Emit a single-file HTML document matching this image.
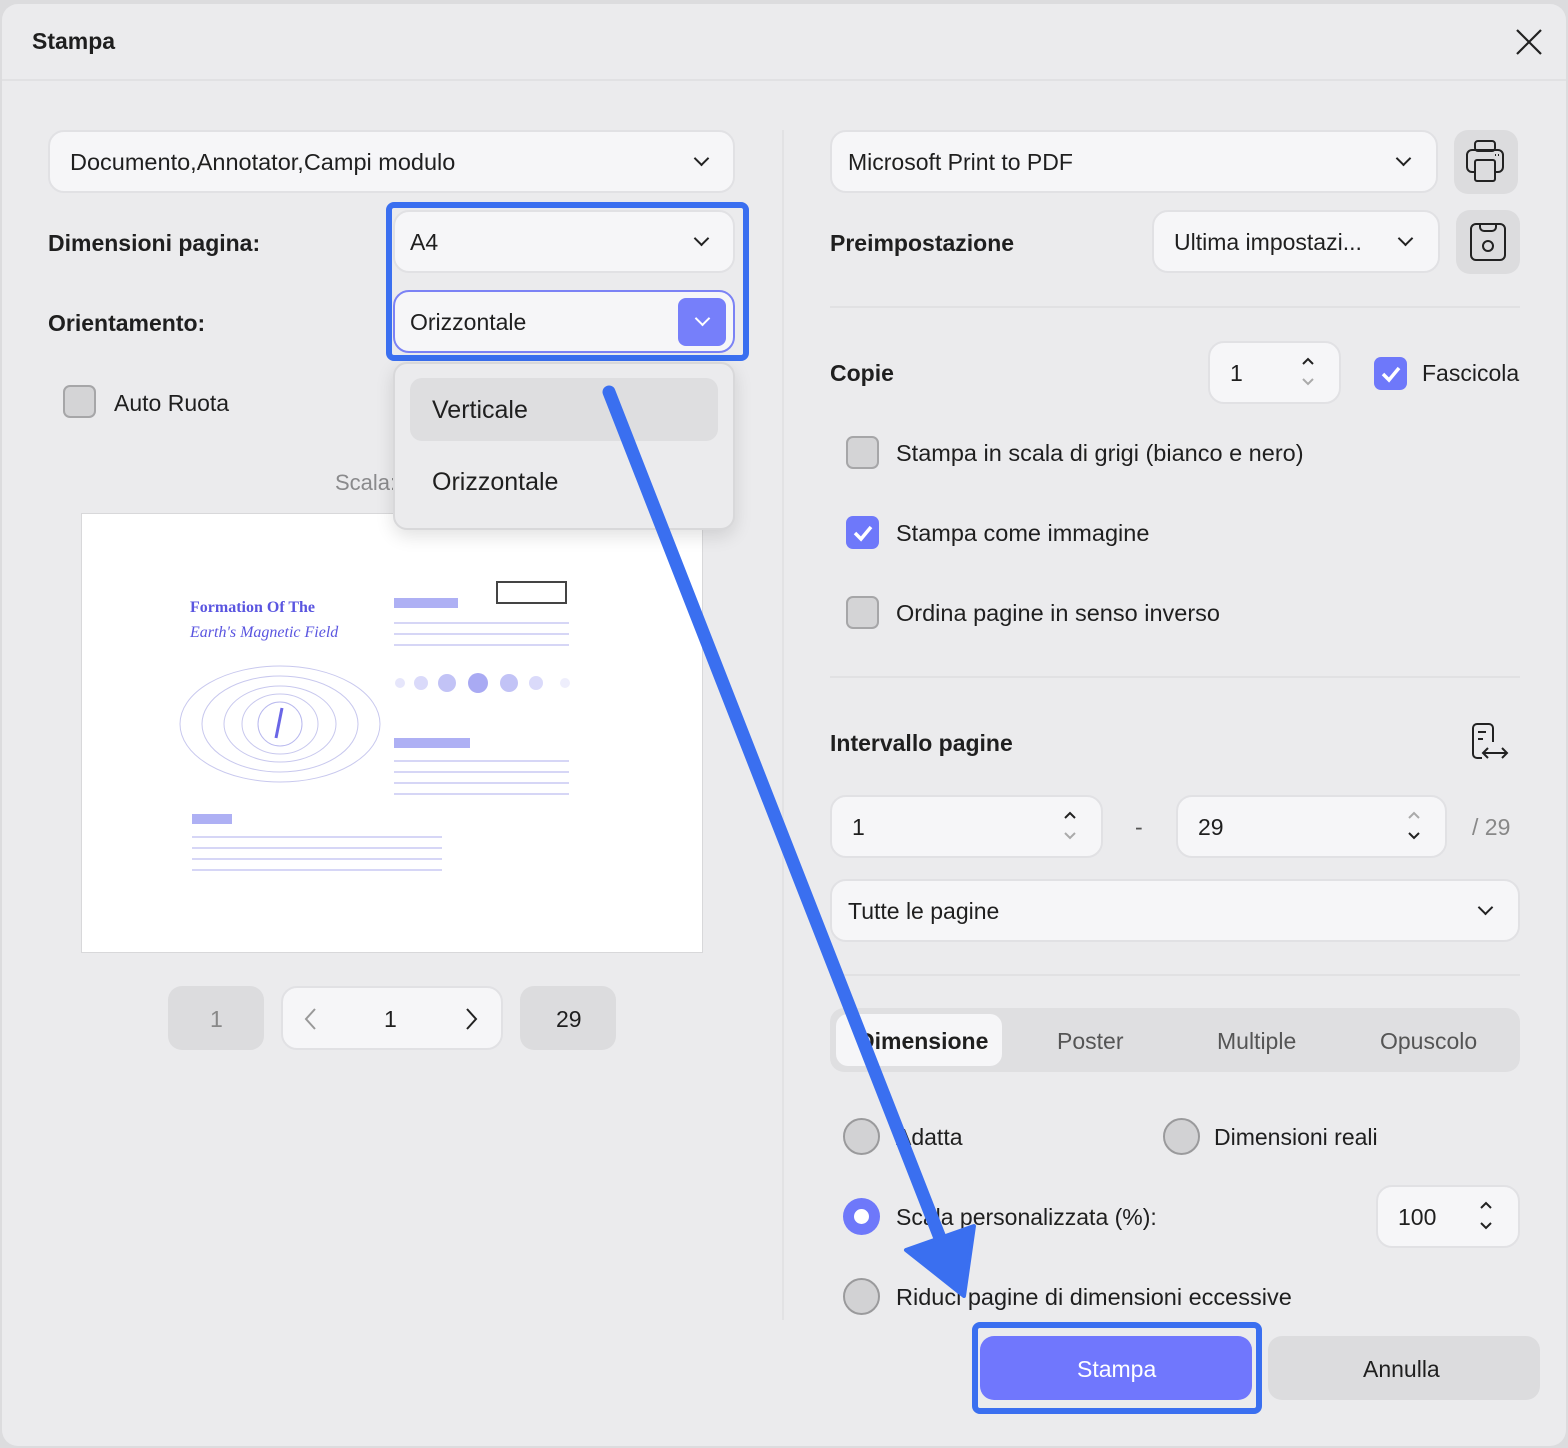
<!DOCTYPE html>
<html><head><meta charset="utf-8">
<style>
*{box-sizing:border-box;margin:0;padding:0}
body{width:1568px;height:1448px;background:#dcdcde;font-family:"Liberation Sans",sans-serif;color:#1f1f1f;position:relative;overflow:hidden}
.dlg{position:absolute;left:2px;top:4px;width:1564px;height:1442px;background:#ebebed;border-radius:16px}
.a{position:absolute}
.box{position:absolute;background:#f6f6f8;border:2px solid #e1e1e4;border-radius:16px}
.t{position:absolute;font-size:23px;white-space:nowrap}
.b{font-weight:bold}
.chev{position:absolute;width:11px;height:11px;border-right:2.2px solid #222;border-bottom:2.2px solid #222;transform:rotate(45deg)}
.cb{position:absolute;width:33px;height:33px;border-radius:7px;background:#d4d4d6;border:2px solid #a6a6a8}
.cbon{position:absolute;width:33px;height:33px;border-radius:7px;background:#6e78fa}
.rad{position:absolute;width:37px;height:37px;border-radius:50%;background:#d2d2d4;border:2px solid #9a9a9c}
.btn{position:absolute;border-radius:14px;background:#dcdcde}
.sep{position:absolute;height:2px;background:#e1e1e3}
</style></head><body>
<div class="dlg"></div>
<div class="t b" style="left:32px;top:28px;font-size:23px">Stampa</div>
<svg class="a" style="left:1514px;top:27px" width="30" height="30"><path d="M3 3L27 27M27 3L3 27" stroke="#222" stroke-width="2.2"/></svg>
<div class="sep" style="left:2px;top:79px;width:1564px"></div>
<div class="a" style="left:782px;top:130px;width:2px;height:1190px;background:#e2e2e4"></div>

<!-- left -->
<div class="box" style="left:48px;top:130px;width:687px;height:63px"></div>
<div class="t" style="left:70px;top:149px;font-size:23.5px">Documento,Annotator,Campi modulo</div>
<div class="chev" style="left:696px;top:153px"></div>

<div class="t b" style="left:48px;top:230px">Dimensioni pagina:</div>
<div class="box" style="left:393px;top:210px;width:342px;height:63px"></div>
<div class="t" style="left:410px;top:229px">A4</div>
<div class="chev" style="left:696px;top:233px"></div>

<div class="t b" style="left:48px;top:310px">Orientamento:</div>
<div class="box" style="left:393px;top:290px;width:342px;height:63px;border-color:#7b82f5"></div>
<div class="t" style="left:410px;top:309px">Orizzontale</div>
<div class="a" style="left:678px;top:298px;width:48px;height:48px;border-radius:8px;background:#767ffa"></div>
<div class="chev" style="left:697px;top:313px;border-color:#fff"></div>
<div class="a" style="left:386px;top:202px;width:363px;height:159px;border:6px solid #3a6ff0;border-radius:8px"></div>

<div class="cb" style="left:63px;top:385px"></div>
<div class="t" style="left:114px;top:390px">Auto Ruota</div>
<div class="t" style="left:335px;top:470px;color:#8a8a8c;font-size:22px">Scala:</div>

<!-- preview -->
<div class="a" style="left:81px;top:513px;width:622px;height:440px;background:#fff;border:1px solid #d8d8da">
 <div class="a" style="left:108px;top:85px;font-family:'Liberation Serif',serif;font-weight:bold;color:#5a55e0;font-size:16px">Formation Of The</div>
 <div class="a" style="left:108px;top:110px;font-family:'Liberation Serif',serif;font-style:italic;color:#5a55e0;font-size:16px">Earth's Magnetic Field</div>
 <div class="a" style="left:414px;top:67px;width:71px;height:23px;border:2px solid #444"></div>
 <div class="a" style="left:312px;top:84px;width:64px;height:10px;background:#aeb0f4"></div>
 <div class="a" style="left:312px;top:102px;width:175px;height:36px;background:repeating-linear-gradient(#fff 0 6px,#d6d6f6 6px 8px,#fff 8px 11px)"></div>
 <svg class="a" style="left:95px;top:150px" width="210" height="130"><g fill="none" stroke="#c8c8ee" stroke-width="1"><ellipse cx="103" cy="60" rx="100" ry="58"/><ellipse cx="103" cy="60" rx="78" ry="48"/><ellipse cx="103" cy="60" rx="56" ry="38"/><ellipse cx="103" cy="60" rx="38" ry="30"/><circle cx="103" cy="60" r="22" stroke="#b8b8ee"/></g><path d="M105 44L99 74" stroke="#6a66e6" stroke-width="3"/></svg>
 <svg class="a" style="left:310px;top:155px" width="180" height="50"><g fill="#c2c3f6"><circle cx="8" cy="14" r="5" fill="#e6e6fb"/><circle cx="29" cy="14" r="7" fill="#dadafa"/><circle cx="55" cy="14" r="9"/><circle cx="86" cy="14" r="10" fill="#a9aaf3"/><circle cx="117" cy="14" r="9"/><circle cx="144" cy="14" r="7" fill="#dadafa"/><circle cx="173" cy="14" r="5" fill="#eeeefc"/></g></svg>
 <div class="a" style="left:312px;top:224px;width:76px;height:10px;background:#aeb0f4"></div>
 <div class="a" style="left:312px;top:240px;width:175px;height:48px;background:repeating-linear-gradient(#fff 0 6px,#d6d6f6 6px 8px,#fff 8px 11px)"></div>
 <div class="a" style="left:110px;top:300px;width:40px;height:10px;background:#aeb0f4"></div>
 <div class="a" style="left:110px;top:316px;width:250px;height:44px;background:repeating-linear-gradient(#fff 0 6px,#d6d6f6 6px 8px,#fff 8px 11px)"></div>
</div>

<!-- dropdown menu -->
<div class="a" style="left:393px;top:362px;width:342px;height:168px;background:#ebebed;border:2px solid #d8d8da;border-radius:14px;box-shadow:0 6px 18px rgba(0,0,0,.12)"></div>
<div class="a" style="left:410px;top:378px;width:308px;height:63px;background:#dedee0;border-radius:12px"></div>
<div class="t" style="left:432px;top:396px;font-size:25px">Verticale</div>
<div class="t" style="left:432px;top:468px;font-size:25px">Orizzontale</div>

<!-- pager -->
<div class="btn" style="left:168px;top:986px;width:96px;height:64px"></div>
<div class="t" style="left:210px;top:1006px;color:#888">1</div>
<div class="box" style="left:281px;top:986px;width:222px;height:64px"></div>
<svg class="a" style="left:303px;top:1007px" width="16" height="24"><path d="M12 2L3 12L12 22" fill="none" stroke="#999" stroke-width="2"/></svg>
<div class="t" style="left:384px;top:1006px">1</div>
<svg class="a" style="left:463px;top:1007px" width="16" height="24"><path d="M4 2L13 12L4 22" fill="none" stroke="#222" stroke-width="2"/></svg>
<div class="btn" style="left:520px;top:986px;width:96px;height:64px"></div>
<div class="t" style="left:556px;top:1006px">29</div>

<!-- right -->
<div class="box" style="left:830px;top:130px;width:608px;height:63px"></div>
<div class="t" style="left:848px;top:149px">Microsoft Print to PDF</div>
<div class="chev" style="left:1398px;top:153px"></div>
<div class="btn" style="left:1454px;top:130px;width:64px;height:64px"></div>
<svg class="a" style="left:1466px;top:140px" width="40" height="44" fill="none" stroke="#222" stroke-width="2"><rect x="9" y="1" width="20" height="10" rx="3"/><rect x="1" y="10" width="36" height="22" rx="5"/><rect x="9" y="20" width="20" height="21" rx="2" fill="#dcdcde"/><path d="M29 15h1M32 15h1"/></svg>

<div class="t b" style="left:830px;top:230px">Preimpostazione</div>
<div class="box" style="left:1152px;top:210px;width:288px;height:63px"></div>
<div class="t" style="left:1174px;top:229px">Ultima impostazi...</div>
<div class="chev" style="left:1400px;top:233px"></div>
<div class="btn" style="left:1456px;top:210px;width:64px;height:64px"></div>
<svg class="a" style="left:1470px;top:222px" width="36" height="40" fill="none" stroke="#222" stroke-width="2"><path d="M6 2h24a5 5 0 0 1 5 5v26a5 5 0 0 1-5 5H6a5 5 0 0 1-5-5V7a5 5 0 0 1 5-5z"/><path d="M10 2v3a4 4 0 0 0 4 4h8a4 4 0 0 0 4-4V2"/><circle cx="18" cy="24" r="5"/></svg>
<div class="sep" style="left:830px;top:306px;width:690px"></div>

<div class="t b" style="left:830px;top:360px">Copie</div>
<div class="box" style="left:1208px;top:341px;width:133px;height:63px"></div>
<div class="t" style="left:1230px;top:360px">1</div>
<svg class="a" style="left:1300px;top:354px" width="16" height="36" fill="none" stroke-width="2"><path d="M3 10L8 5L13 10" stroke="#222"/><path d="M3 25L8 30L13 25" stroke="#aaa"/></svg>
<div class="cbon" style="left:1374px;top:357px"></div>
<svg class="a" style="left:1379px;top:362px" width="24" height="24"><path d="M4 12L10 18L20 6" fill="none" stroke="#fff" stroke-width="3.5"/></svg>
<div class="t" style="left:1422px;top:360px">Fascicola</div>

<div class="cb" style="left:846px;top:436px"></div>
<div class="t" style="left:896px;top:440px;font-size:23.5px">Stampa in scala di grigi (bianco e nero)</div>
<div class="cbon" style="left:846px;top:516px"></div>
<svg class="a" style="left:851px;top:521px" width="24" height="24"><path d="M4 12L10 18L20 6" fill="none" stroke="#fff" stroke-width="3.5"/></svg>
<div class="t" style="left:896px;top:520px;font-size:23.5px">Stampa come immagine</div>
<div class="cb" style="left:846px;top:596px"></div>
<div class="t" style="left:896px;top:600px;font-size:23.5px">Ordina pagine in senso inverso</div>
<div class="sep" style="left:830px;top:676px;width:690px"></div>

<div class="t b" style="left:830px;top:730px">Intervallo pagine</div>
<svg class="a" style="left:1470px;top:722px" width="40" height="40" fill="none" stroke="#222" stroke-width="2"><path d="M12 36H7a4 4 0 0 1-4-4V6a4 4 0 0 1 4-4h12a4 4 0 0 1 4 4v14"/><path d="M8 10h8M8 17h5"/><path d="M14 31h22M18 26l-5 5 5 5M32 26l5 5-5 5"/></svg>
<div class="box" style="left:830px;top:795px;width:273px;height:63px"></div>
<div class="t" style="left:852px;top:814px">1</div>
<svg class="a" style="left:1062px;top:808px" width="16" height="36" fill="none" stroke-width="2"><path d="M3 10L8 5L13 10" stroke="#222"/><path d="M3 25L8 30L13 25" stroke="#aaa"/></svg>
<div class="t" style="left:1135px;top:814px;color:#555">-</div>
<div class="box" style="left:1176px;top:795px;width:271px;height:63px"></div>
<div class="t" style="left:1198px;top:814px">29</div>
<svg class="a" style="left:1406px;top:808px" width="16" height="36" fill="none" stroke-width="2"><path d="M3 10L8 5L13 10" stroke="#aaa"/><path d="M3 25L8 30L13 25" stroke="#222"/></svg>
<div class="t" style="left:1472px;top:814px;color:#888">/ 29</div>
<div class="box" style="left:830px;top:879px;width:690px;height:63px"></div>
<div class="t" style="left:848px;top:898px">Tutte le pagine</div>
<div class="chev" style="left:1480px;top:902px"></div>
<div class="sep" style="left:830px;top:974px;width:690px"></div>

<div class="a" style="left:830px;top:1008px;width:690px;height:64px;background:#dfdfe1;border-radius:14px"></div>
<div class="a" style="left:836px;top:1014px;width:166px;height:52px;background:#f6f6f8;border-radius:12px"></div>
<div class="t b" style="left:858px;top:1028px">Dimensione</div>
<div class="t" style="left:1057px;top:1028px;color:#555">Poster</div>
<div class="t" style="left:1217px;top:1028px;color:#555">Multiple</div>
<div class="t" style="left:1380px;top:1028px;color:#555">Opuscolo</div>

<div class="rad" style="left:843px;top:1118px"></div>
<div class="t" style="left:896px;top:1124px">Adatta</div>
<div class="rad" style="left:1163px;top:1118px"></div>
<div class="t" style="left:1214px;top:1124px">Dimensioni reali</div>
<div class="a" style="left:843px;top:1198px;width:37px;height:37px;border-radius:50%;background:#6e78fa"></div>
<div class="a" style="left:854px;top:1209px;width:15px;height:15px;border-radius:50%;background:#fff"></div>
<div class="t" style="left:896px;top:1204px">Scala personalizzata (%):</div>
<div class="box" style="left:1376px;top:1185px;width:144px;height:63px"></div>
<div class="t" style="left:1398px;top:1204px">100</div>
<svg class="a" style="left:1478px;top:1198px" width="16" height="36" fill="none" stroke-width="2"><path d="M3 10L8 5L13 10" stroke="#222"/><path d="M3 25L8 30L13 25" stroke="#222"/></svg>
<div class="rad" style="left:843px;top:1278px"></div>
<div class="t" style="left:896px;top:1284px;font-size:23.5px">Riduci pagine di dimensioni eccessive</div>

<div class="a" style="left:980px;top:1336px;width:272px;height:64px;border-radius:14px;background:#7077fd"></div>
<div class="t" style="left:1077px;top:1356px;color:#fff">Stampa</div>
<div class="a" style="left:972px;top:1322px;width:290px;height:92px;border:6px solid #3a6ff0;border-radius:8px"></div>
<div class="btn" style="left:1268px;top:1336px;width:272px;height:64px"></div>
<div class="t" style="left:1363px;top:1356px">Annulla</div>

<!-- arrow -->
<svg class="a" style="left:0;top:0" width="1568" height="1448"><path d="M609 392L940 1238" stroke="#3a6ff0" stroke-width="13" stroke-linecap="round"/><polygon points="906,1250 974,1226 964,1296" fill="#3a6ff0" stroke="#3a6ff0" stroke-width="4" stroke-linejoin="round"/></svg>
</body></html>
